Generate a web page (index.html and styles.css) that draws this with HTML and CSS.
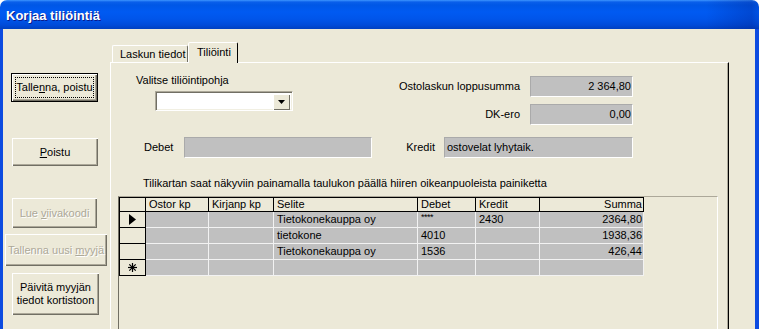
FILE: index.html
```html
<!DOCTYPE html>
<html>
<head>
<title>Korjaa tiliöintiä</title>
<meta charset="utf-8">
<link rel="stylesheet" href="styles.css">
</head>
<body>

<div class="window">
  <div class="titlebar">Korjaa tiliöintiä</div>
  <div class="frame">
    <div class="client">

      <!-- vasen painikepalkki -->
      <div class="side">
        <div class="btn b-save"><span class="focus">Talle<u>n</u>na, poistu</span></div>
        <div class="btn b-quit"><span><u>P</u>oistu</span></div>
        <div class="btn b-scan off"><span>Lue <u>v</u>iivakoodi</span></div>
        <div class="btn b-new off"><span>Tallenna uusi <u>m</u>yyjä</span></div>
        <div class="btn b-upd"><span>Päivitä myyjän<br>tiedot kortistoon</span></div>
      </div>

      <!-- välilehdet -->
      <div class="tabctl">
        <div class="tabs">
          <div class="tab">Laskun tiedot</div>
          <div class="tab on">Tiliöinti</div>
        </div>
        <div class="panel">
          <div class="top">
            <div class="pick">
              <div class="pick-label">Valitse tiliöintipohja</div>
              <div class="combo">
                <div class="combo-btn">
                  <svg width="7" height="4" viewBox="0 0 7 4"><polygon points="0,0 7,0 3.5,4" fill="#000"/></svg>
                </div>
              </div>
            </div>
            <div class="sums">
              <div class="lbl">Ostolaskun loppusumma</div>
              <div class="fld num">2 364,80</div>
              <div class="lbl">DK-ero</div>
              <div class="fld num">0,00</div>
            </div>
          </div>

          <div class="kd">
            <div class="lbl-d">Debet</div>
            <div class="fld debet"></div>
            <div class="lbl-k">Kredit</div>
            <div class="fld kredit">ostovelat lyhytaik.</div>
          </div>

          <div class="hint">Tilikartan saat näkyviin painamalla taulukon päällä hiiren oikeanpuoleista painiketta</div>

          <div class="sub">
            <div class="grid">
              <div class="row hdr">
                <div class="c sel"></div>
                <div class="c">Ostor kp</div>
                <div class="c">Kirjanp kp</div>
                <div class="c">Selite</div>
                <div class="c">Debet</div>
                <div class="c">Kredit</div>
                <div class="c r">Summa</div>
              </div>
              <div class="row">
                <div class="c sel">
                  <svg width="7" height="11" viewBox="0 0 7 11"><polygon points="0,0 7,5.5 0,11" fill="#000"/></svg>
                </div>
                <div class="c"></div>
                <div class="c"></div>
                <div class="c">Tietokonekauppa oy</div>
                <div class="c"><span class="stars">****</span></div>
                <div class="c">2430</div>
                <div class="c r">2364,80</div>
              </div>
              <div class="row">
                <div class="c sel"></div>
                <div class="c"></div>
                <div class="c"></div>
                <div class="c">tietokone</div>
                <div class="c">4010</div>
                <div class="c"></div>
                <div class="c r">1938,36</div>
              </div>
              <div class="row">
                <div class="c sel"></div>
                <div class="c"></div>
                <div class="c"></div>
                <div class="c">Tietokonekauppa oy</div>
                <div class="c">1536</div>
                <div class="c"></div>
                <div class="c r">426,44</div>
              </div>
              <div class="row">
                <div class="c sel">
                  <svg width="9" height="9" viewBox="0 0 9 9" stroke="#000" stroke-width="1.2"><line x1="4.5" y1="0" x2="4.5" y2="9"/><line x1="0" y1="4.5" x2="9" y2="4.5"/><line x1="1.3" y1="1.3" x2="7.7" y2="7.7"/><line x1="7.7" y1="1.3" x2="1.3" y2="7.7"/></svg>
                </div>
                <div class="c"></div>
                <div class="c"></div>
                <div class="c"></div>
                <div class="c"></div>
                <div class="c"></div>
                <div class="c r"></div>
              </div>
            </div>
          </div>
        </div>
      </div>

    </div>
  </div>
</div>

</body>
</html>
```

FILE: styles.css
```css
*{box-sizing:border-box;}
html,body{margin:0;padding:0;background:#fff;}
body{width:759px;height:329px;overflow:hidden;font-family:"Liberation Sans",Arial,sans-serif;font-size:11px;color:#000;}

/* ikkunan kehys */
.titlebar{height:29px;border-radius:7px 7px 0 0;padding:2px 0 0 6px;line-height:27px;color:#fff;font-weight:bold;font-size:13px;text-shadow:1px 1px #0a1a8a;
  background:linear-gradient(to right,rgba(0,0,0,0) 93%,rgba(0,20,120,.25) 99%,rgba(0,20,120,.1)),
             linear-gradient(#3d95ff 0,#0a5fea 2px,#0057e6 5px,#005af2 12px,#0055ea 19px,#004bd9 25px,#0040c0 29px);}
.frame{background:#0c4be0;padding:0 4px 0 3px;height:300px;}
.client{background:#ECE9D8;height:300px;display:flex;}

/* painikkeet */
.side{width:107px;flex:none;display:flex;flex-direction:column;align-items:flex-start;}
.btn{background:#ECE9D8;display:flex;align-items:center;justify-content:center;text-align:center;line-height:13px;
  box-shadow:inset 1px 1px #fff,inset -1px -1px #716f64,inset -2px -2px #aca899;}
.btn.off{color:#aca899;text-shadow:1px 1px #fff;}
.b-save{margin:44px 0 0 8px;width:87px;height:29px;border:1px solid #000;padding:3px;}
.b-save .focus{flex:1;align-self:stretch;display:flex;align-items:center;justify-content:center;border:1px dotted #000;}
.b-quit{margin:36px 0 0 9px;width:86px;height:28px;}
.b-scan{margin:32px 0 0 9px;width:85px;height:30px;}
.b-new{margin:6px 0 0 2px;width:102px;height:32px;}
.b-upd{margin:7px 0 0 9px;width:87px;height:42px;}

/* välilehdet */
.tabctl{width:619px;flex:none;padding-top:13px;}
.tabs{display:flex;align-items:flex-end;height:20px;padding-left:2px;}
.tab{width:76px;height:17px;padding-left:7px;line-height:16px;white-space:nowrap;border:1px solid;border-bottom:none;border-color:#fff #716f64 transparent #fff;border-radius:2px 2px 0 0;}
.tab.on{width:50px;height:21px;padding-left:8px;line-height:18px;margin-bottom:-1px;position:relative;z-index:1;background:#ECE9D8;border-right-color:#000;}
.panel{height:280px;border-top:1px solid #fff;border-left:1px solid #fff;border-right:1px solid #000;box-shadow:inset -1px 0 #aca899;}

.top{display:flex;}
.pick{width:269px;padding:11px 0 0 25px;}
.pick-label{line-height:13px;height:13px;}
.combo{margin:4px 0 0 19px;width:138px;height:20px;background:#fff;padding:1px;display:flex;justify-content:flex-end;
  border:1px solid;border-color:#aca899 #fff #fff #aca899;box-shadow:inset 1px 1px #716f64,inset -1px -1px #f1efe2;}
.combo-btn{width:17px;height:16px;margin:1px 1px 0 0;background:#ECE9D8;display:flex;align-items:center;justify-content:center;
  box-shadow:inset 1px 1px #fff,inset -1px -1px #716f64;}

.sums{display:grid;grid-template-columns:140px 103px;grid-auto-rows:21px;column-gap:10px;row-gap:7px;padding-top:13px;}
.lbl{text-align:right;line-height:21px;white-space:nowrap;}
.fld{background:#c0c0c0;border:1px solid;border-color:#aaa #fff #fff #aaa;line-height:19px;padding:0 2px;white-space:nowrap;overflow:hidden;}
.num{text-align:right;padding-right:1px;}

.kd{display:flex;margin-top:12px;padding-left:33px;height:21px;line-height:21px;}
.lbl-d{width:40px;}
.debet{width:188px;}
.lbl-k{width:72px;text-align:right;padding-right:9px;}
.kredit{width:189px;}

.hint{margin-top:19px;padding-left:32px;line-height:13px;white-space:nowrap;}

/* taulukko */
.sub{margin:6px 0 0 7px;width:600px;height:140px;border-top:1px solid #aca899;border-left:1px solid #716f64;border-right:1px solid #fff;}
.grid{width:525px;border-top:1px solid #000;border-left:1px solid #000;}
.row{display:grid;grid-template-columns:26px 63px 65px 144px 58px 64px 104px;height:16px;}
.row .c{background:#c0c0c0;border-right:1px solid #f2f2f2;border-bottom:1px solid #f2f2f2;line-height:15px;padding:0 2px 0 3px;white-space:nowrap;overflow:hidden;}
.row .c.r{text-align:right;padding-right:1px;}
.row .c.sel{background:#ECE9D8;border-color:#000;display:flex;align-items:center;justify-content:center;padding:0;}
.hdr{height:14px;}
.hdr .c{background:#ECE9D8;border-color:#000;line-height:13px;}
.stars{font-size:9px;vertical-align:top;line-height:11px;letter-spacing:-0.5px;}
```
